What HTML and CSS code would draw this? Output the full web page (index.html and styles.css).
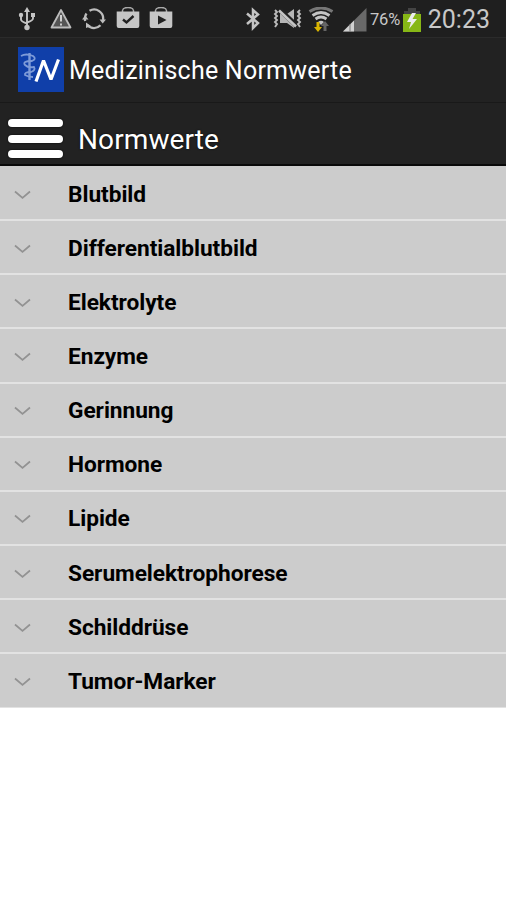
FILE: index.html
```html
<!DOCTYPE html>
<html lang="de">
<head>
<meta charset="utf-8">
<title>Medizinische Normwerte</title>
<link rel="stylesheet" href="styles.css">
</head>
<body>
<div class="status">
  <div class="status-left">
    <svg width="18" height="24" viewBox="0 0 18 24" fill="none" stroke="#c4c4c4" stroke-width="1.9"><path d="M9 4v16M3 9v3.500q0 2 6 4M15 9v2.500q0 2-6 4"/><path d="M9 0l3 5H6z" fill="#c4c4c4" stroke="none"/><circle cx="9" cy="20.500" r="2.700" fill="#c4c4c4" stroke="none"/><circle cx="3" cy="8" r="2.200" fill="#c4c4c4" stroke="none"/><path d="M13 6h4v4h-4z" fill="#c4c4c4" stroke="none"/></svg>
    <svg width="22" height="24" viewBox="0 0 22 24"><path d="M11 3L20.500 20.500h-19z" fill="#555" stroke="#bcbcbc" stroke-width="1.800" stroke-linejoin="round"/><path d="M11 8v6.500M11 16.500v2" stroke="#d0d0d0" stroke-width="2"/></svg>
    <svg width="24" height="24" viewBox="0 0 24 24" fill="none" stroke="#bdbdbd" stroke-width="2.300"><path d="M7.500 3.800A9 9 0 0 1 21 13M18.500 18.300A9 9 0 0 1 5.500 18.200M3.200 14A9 9 0 0 1 4.500 6.500"/><path d="M17.500 12.500H24l-3.300 4zM0 12.500h6.500l-3.300-4zM4 15.500v5.500l5-2z" fill="#bdbdbd" stroke="none"/></svg>
    <svg width="24" height="24" viewBox="0 0 24 24"><path d="M6.500 5V3.500Q7 .5 12 .5t5.500 3V5" fill="none" stroke="#aaa" stroke-width="1.500"/><path d="M.7 4.500h22.600v14.500q0 2-2 2H2.700q-2 0-2-2z" fill="#c6c6c6"/><path d="M7 12.500l3.500 3 7-6.500" fill="none" stroke="#222" stroke-width="2.400"/></svg>
    <svg width="24" height="24" viewBox="0 0 24 24"><path d="M6.500 5V3.500Q7 .5 12 .5t5.500 3V5" fill="none" stroke="#aaa" stroke-width="1.500"/><path d="M.7 4.500h22.600v14.500q0 2-2 2H2.700q-2 0-2-2z" fill="#c6c6c6"/><path d="M9 8.500l8.500 4.500L9 17.500z" fill="#222"/></svg>
  </div>
  <div class="status-right">
    <svg class="bt" width="16" height="24" viewBox="0 0 16 24" fill="none" stroke="#c4c4c4" stroke-width="2.500"><path d="M2 6.500l11 9.500-5 5V3l5 4.500-11 9.500"/></svg>
    <svg class="mute" width="30" height="24" viewBox="0 0 30 24"><path d="M7 7h7l7-5v19l-7-5H7z" fill="#b5b5b5"/><path d="M7 3l18 17" stroke="#222" stroke-width="5"/><path d="M6 3.500l17 16" stroke="#c4c4c4" stroke-width="2.600"/><path d="M2 3l2 2-2 2 2 2-2 2 2 2-2 2 2 2-2 3M27 3l-2 2 2 2-2 2 2 2-2 2 2 2-2 2 2 3" fill="none" stroke="#bbb" stroke-width="1.900"/></svg>
    <svg class="wifi" width="26" height="26" viewBox="0 0 26 26"><path d="M1.500 4.500q11.500-7 23 0" fill="none" stroke="#777" stroke-width="3"/><path d="M4.500 8.500q8.500-6 17 0M7.500 12q5.500-4 11 0" fill="none" stroke="#c4c4c4" stroke-width="2.800"/><path d="M10 15q3-2.500 6 0l-3 3z" fill="#c4c4c4"/><path d="M8.500 15h3v5h2.500l-4 5-4-5h2.500z" fill="#d9b500"/><path d="M15.500 24v-5H13l4-5 4 5h-2.500v5z" fill="#656565"/></svg>
    <svg class="signal" width="24" height="24" viewBox="0 0 24 24"><path d="M0 23.500L23.500 0v23.500z" fill="#696969"/><path d="M0 23.500L11 12.500v11z" fill="#d0d0d0"/><path d="M7 16v8" stroke="#777" stroke-width="1"/></svg>
    <span class="percent">76%</span>
    <svg class="battery" width="18" height="25" viewBox="0 0 18 25"><path d="M5 1h8v3h4v5H1V4h4z" fill="#444"/><path d="M0 7h18v18H0z" fill="#87b716"/><path d="M9 6L4 15h4l-2 7 8-10H9.500L13 6z" fill="#ededed"/></svg>
    <span class="clock">20:23</span>
  </div>
</div>
<div class="appbar">
  <svg class="logo" width="46" height="45" viewBox="0 0 46 45"><path d="M0 0h46v45H0z" fill="#103fa9"/><g fill="none" stroke="#7e9bd8" stroke-width="1.800"><path d="M11.500 6v27" stroke-width="2.400"/><path d="M3 9q5-3 12 0 4 3-1 5-10 0-7 4 3 3 9 2 2 3-3 5-7 0-6 3 3 2 8 2"/></g><path d="M18 34.500L25.500 13.500l7.500 19L40.500 12.500" fill="none" stroke="#fff" stroke-width="3.200" stroke-linejoin="bevel"/></svg>
  <h1>Medizinische Normwerte</h1>
</div>
<div class="header">
  <div class="menu"><i></i><i></i><i></i></div>
  <h2>Normwerte</h2>
</div>
<ul class="list">
  <li><svg width="17" height="10" viewBox="0 0 17 10"><path d="M1 1.500l7.500 6.500L16 1.500"/></svg><span>Blutbild</span></li>
  <li><svg width="17" height="10" viewBox="0 0 17 10"><path d="M1 1.500l7.500 6.500L16 1.500"/></svg><span>Differentialblutbild</span></li>
  <li><svg width="17" height="10" viewBox="0 0 17 10"><path d="M1 1.500l7.500 6.500L16 1.500"/></svg><span>Elektrolyte</span></li>
  <li><svg width="17" height="10" viewBox="0 0 17 10"><path d="M1 1.500l7.500 6.500L16 1.500"/></svg><span>Enzyme</span></li>
  <li><svg width="17" height="10" viewBox="0 0 17 10"><path d="M1 1.500l7.500 6.500L16 1.500"/></svg><span>Gerinnung</span></li>
  <li><svg width="17" height="10" viewBox="0 0 17 10"><path d="M1 1.500l7.500 6.500L16 1.500"/></svg><span>Hormone</span></li>
  <li><svg width="17" height="10" viewBox="0 0 17 10"><path d="M1 1.500l7.500 6.500L16 1.500"/></svg><span>Lipide</span></li>
  <li><svg width="17" height="10" viewBox="0 0 17 10"><path d="M1 1.500l7.500 6.500L16 1.500"/></svg><span>Serumelektrophorese</span></li>
  <li><svg width="17" height="10" viewBox="0 0 17 10"><path d="M1 1.500l7.500 6.500L16 1.500"/></svg><span>Schilddrüse</span></li>
  <li><svg width="17" height="10" viewBox="0 0 17 10"><path d="M1 1.500l7.500 6.500L16 1.500"/></svg><span>Tumor-Marker</span></li>
</ul>
</body>
</html>
```
FILE: styles.css
```css
* { box-sizing: border-box; }
body { margin: 0; background: #fff; font-family: Roboto, sans-serif; }
h1, h2 { margin: 0; font-weight: 400; color: #fff; white-space: nowrap; }
svg { flex: none; display: block; }
.status { height: 37px; background: #1f1f1f; display: flex; justify-content: space-between; padding: 7px 16px 0 18px; }
.status-left { display: flex; gap: 10px; }
.status-left svg:nth-child(1) { margin-right: 4px; }
.status-left svg:nth-child(4) { margin-right: -1px; }
.status-right { display: flex; width: 245px; color: #c8c8c8; }
.mute { margin-left: 12px; }
.wifi { margin-left: 5px; }
.signal { margin: 1px 0 0 9px; }
.percent { width: 39px; padding-left: 3px; font-size: 16.5px; line-height: 25px; letter-spacing: -0.2px; }
.battery { margin-left: -2px; }
.clock { margin-left: 7px; font-size: 25px; line-height: 25px; white-space: nowrap; }
.appbar { height: 66px; background: #222; border-top: 1px solid #2b2b2b; border-bottom: 1px solid #191919; display: flex; padding: 9px 0 0 18px; }
h1 { margin-left: 5px; font-size: 25px; line-height: 48px; letter-spacing: 0.23px; }
.header { height: 63px; background: #222; border-bottom: 2px solid #090909; display: flex; padding: 16px 0 0 8px; }
.menu { width: 55px; height: 39px; display: flex; flex-direction: column; justify-content: space-between; }
.menu i { height: 8px; border-radius: 4px; background: #fff; box-shadow: 0 0 2px #000; }
h2 { margin-left: 15px; font-size: 28px; line-height: 42px; letter-spacing: 0.1px; text-shadow: 0 0 2px #000; }
.list { list-style: none; margin: 0; padding: 1px 0 0; background: #ccc; }
.list li { height: 54.15px; border-bottom: 2px solid #e2e2e2; display: flex; align-items: center; padding: 3px 0 0 14px; }
.list li:last-child { height: 53.5px; border-bottom-width: 1px; }
.list path { fill: none; stroke: #929292; stroke-width: 1.7; }
.list span { margin-left: 37px; font-size: 22.7px; font-weight: 700; line-height: 30px; color: #000; letter-spacing: -0.05px; }
```
